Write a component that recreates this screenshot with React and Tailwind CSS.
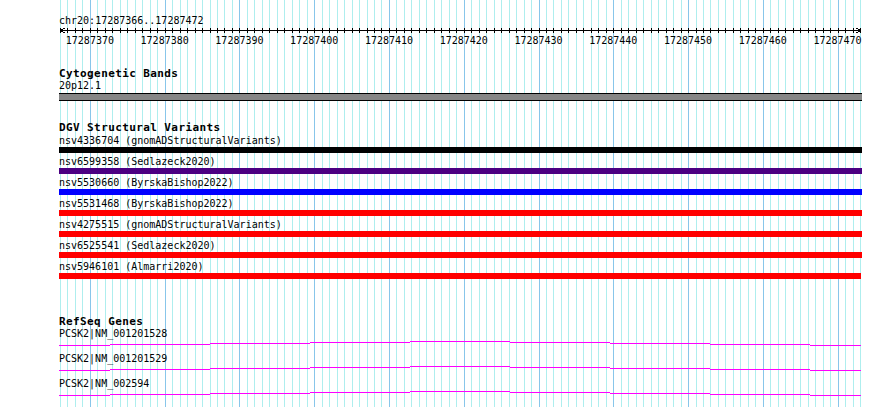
import React from "react";

const START = 17287366;
const END = 17287472;
const PX = 800 / 107;
const gridXs = Array.from({ length: 108 }, (_, k) => 60 + k * PX);

const variants = [
  { name: "nsv4336704 (gnomADStructuralVariants)", color: "bg-black" },
  { name: "nsv6599358 (Sedlazeck2020)", color: "bg-[#4b0082]" },
  { name: "nsv5530660 (ByrskaBishop2022)", color: "bg-[#0000ff]" },
  { name: "nsv5531468 (ByrskaBishop2022)", color: "bg-[#ff0000]" },
  { name: "nsv4275515 (gnomADStructuralVariants)", color: "bg-[#ff0000]" },
  { name: "nsv6525541 (Sedlazeck2020)", color: "bg-[#ff0000]" },
  { name: "nsv5946101 (Almarri2020)", color: "bg-[#ff0000]" }
];

const transcripts = ["PCSK2|NM_001201528", "PCSK2|NM_001201529", "PCSK2|NM_002594"];

// intron line steps (x edges are page coords, y is offset in the row)
const edges = [59, 110, 210, 310, 410, 510, 610, 710, 810, 861];
const levels = [5, 4, 3, 2, 1, 2, 3, 4, 5];

const px = x => Math.round(x) + 0.5;

const Grid = () => (
  <svg
    className="absolute left-0 top-0"
    width="890"
    height="407"
    shapeRendering="crispEdges"
  >
    {gridXs.map((x, k) => (
      <line
        key={k}
        x1={px(x)}
        x2={px(x)}
        y1="0"
        y2="407"
        stroke={(START + k) % 10 === 0 ? "#88c6ea" : "#aeeeee"}
        strokeWidth="1"
      />
    ))}
  </svg>
);

const Ruler = () => {
  const ox = 59;
  return (
    <svg width="803" height="21" shapeRendering="crispEdges" className="block">
      <line x1={60 - ox} x2={861 - ox} y1="3.5" y2="3.5" stroke="#000" />
      {gridXs.map((x, k) => (
        <line
          key={k}
          x1={px(x) - ox}
          x2={px(x) - ox}
          y1="1"
          y2="6"
          stroke="#000"
        />
      ))}
      <polyline
        points={`${64.5 - ox},1 ${60.5 - ox},3.5 ${64.5 - ox},6`}
        fill="none"
        stroke="#000"
      />
      <polyline
        points={`${856.5 - ox},1 ${860.5 - ox},3.5 ${856.5 - ox},6`}
        fill="none"
        stroke="#000"
      />
      {gridXs.map((x, k) =>
        (START + k) % 10 === 0 ? (
          <text
            key={k}
            x={x - ox}
            y="17"
            textAnchor="middle"
            fontFamily="'DejaVu Sans Mono', monospace"
            fontSize="10"
            fill="#000"
          >
            {START + k}
          </text>
        ) : null
      )}
    </svg>
  );
};

const Intron = () => (
  <svg width="803" height="13" shapeRendering="crispEdges" className="block">
    {levels.map((y, i) => (
      <rect
        key={i}
        x={edges[i] - 59}
        y={y}
        width={edges[i + 1] - edges[i]}
        height="1"
        fill="#ff00ff"
      />
    ))}
  </svg>
);

const Title = ({ children, className }) => (
  <div
    className={
      "font-bold text-[11px] leading-[12px] tracking-[0.4px] whitespace-nowrap " +
      className
    }
  >
    {children}
  </div>
);

const App = () => {
  return (
    <div className="relative w-[890px] h-[407px] overflow-hidden bg-white text-black font-['DejaVu_Sans_Mono',monospace] text-[10px] leading-[12px]">
      <Grid />
      <div className="relative flex flex-col w-[862px] pl-[59px]">
        <div className="mt-[15px] whitespace-nowrap">
          chr20:{START}..{END}
        </div>
        <Ruler />

        <Title className="mt-[20px]">Cytogenetic Bands</Title>
        <div>20p12.1</div>
        <div className="mt-[1px] h-[8px] w-[803px] border-y border-black bg-[#868686]" />

        <Title className="mt-[21px]">DGV Structural Variants</Title>
        <div className="mt-[1px] flex flex-col gap-[3px]">
          {variants.map((v, i) => (
            <div key={i} className="flex flex-col">
              <div className="whitespace-nowrap">{v.name}</div>
              <div
                className={
                  "h-[6px] " +
                  (i === variants.length - 1 ? "w-[802px] " : "w-[803px] ") +
                  v.color
                }
              />
            </div>
          ))}
        </div>

        <Title className="mt-[37px]">RefSeq Genes</Title>
        <div className="flex flex-col">
          {transcripts.map(t => (
            <div key={t} className="flex flex-col">
              <div className="whitespace-nowrap">{t}</div>
              <Intron />
            </div>
          ))}
        </div>
      </div>
    </div>
  );
};

export default App;
